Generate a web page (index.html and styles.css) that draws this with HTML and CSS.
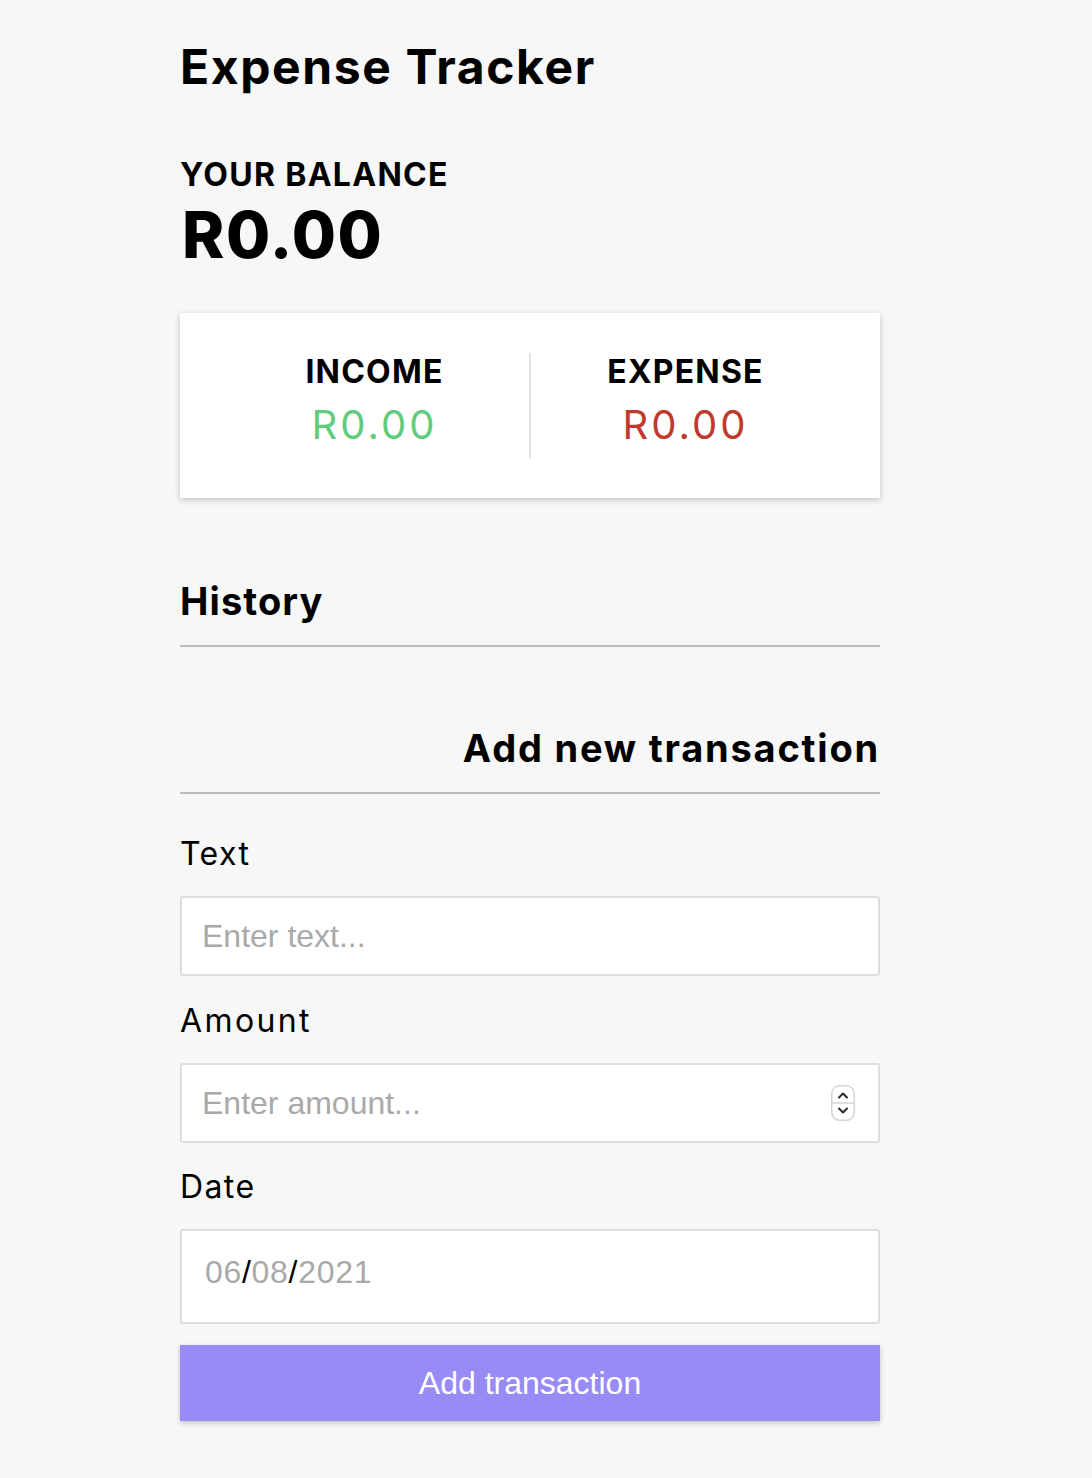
FILE: index.html
```html
<!DOCTYPE html>
<html lang="en">
<head>
<meta charset="utf-8">
<title>Expense Tracker</title>
<link rel="stylesheet" href="styles.css">
</head>
<body>
<main class="container">
  <h2 class="title">Expense Tracker</h2>
  <h4 class="balance-label">Your Balance</h4>
  <h1 class="balance">R0.00</h1>

  <div class="inc-exp">
    <div class="col col-income">
      <h4 class="col-title">Income</h4>
      <p class="money plus">R0.00</p>
    </div>
    <div class="col">
      <h4 class="col-title">Expense</h4>
      <p class="money minus">R0.00</p>
    </div>
  </div>

  <h3 class="section section-history">History</h3>
  <ul class="list"></ul>

  <h3 class="section section-right">Add new transaction</h3>
  <form class="form">
    <div class="form-control">
      <label class="label" for="text">Text</label>
      <input class="input" id="text" type="text" placeholder="Enter text...">
    </div>
    <div class="form-control form-control-mid">
      <label class="label label-amount" for="amount">Amount</label>
      <div class="input field">
        <input class="field-input" id="amount" type="text" placeholder="Enter amount...">
        <svg class="spinner" width="24" height="36" viewBox="0 0 24 36" aria-hidden="true">
          <rect x="0.75" y="0.75" width="22.5" height="34.5" rx="8" fill="#fff" stroke="#d4d4d4" stroke-width="1.5"/>
          <line x1="1" y1="18" x2="23" y2="18" stroke="#d4d4d4" stroke-width="1.5"/>
          <path d="M8 12.5 L12 8.5 L16 12.5" fill="none" stroke="#2a2a2a" stroke-width="2" stroke-linecap="round" stroke-linejoin="round"/>
          <path d="M8 23.5 L12 27.5 L16 23.5" fill="none" stroke="#2a2a2a" stroke-width="2" stroke-linecap="round" stroke-linejoin="round"/>
        </svg>
      </div>
    </div>
    <div class="form-control form-control-last">
      <label class="label" for="date">Date</label>
      <div class="input date" id="date"><span class="seg">06</span><span class="sep">/</span><span class="seg">08</span><span class="sep">/</span><span class="seg">2021</span></div>
    </div>
    <button class="btn" type="button">Add transaction</button>
  </form>
</main>
</body>
</html>
```

FILE: styles.css
```css
* {
  box-sizing: border-box;
}

body {
  margin: 0;
  padding: 38px 32px 60px 0;
  background: #f7f7f7;
  color: #000;
  font-family: Inter, "DejaVu Sans", sans-serif;
}

.container {
  width: 700px;
  margin: 0 auto;
}

.title {
  margin: 0;
  font-size: 48px;
  line-height: 58px;
  font-weight: 700;
  letter-spacing: 1.6px;
}

.balance-label {
  margin: 60px 0 0;
  font-size: 32px;
  line-height: 38px;
  font-weight: 700;
  text-transform: uppercase;
  letter-spacing: 1.3px;
}

.balance {
  margin: 3px 0 0;
  font-size: 64px;
  line-height: 76px;
  font-weight: 800;
  letter-spacing: 1.5px;
  padding-left: 2px;
}

.inc-exp {
  margin-top: 40px;
  padding: 40px;
  background: #fff;
  display: flex;
  box-shadow: 0 2px 6px rgba(0, 0, 0, 0.22);
}

.col {
  flex: 1;
  text-align: center;
}

.col-income {
  border-right: 2px solid #e2e2e2;
}

.col-title {
  margin: 0;
  font-size: 32px;
  line-height: 38px;
  font-weight: 700;
  text-transform: uppercase;
  letter-spacing: 1.2px;
}

.money {
  margin: 10px 0 0;
  padding-bottom: 9px;
  font-size: 40px;
  line-height: 48px;
  font-weight: 400;
  letter-spacing: 3px;
}

.plus {
  color: #62cb7c;
}

.minus {
  color: #c0392b;
}

.section {
  margin: 80px 0 0;
  padding-bottom: 21px;
  border-bottom: 2px solid #bbb;
  font-size: 38px;
  line-height: 46px;
  font-weight: 700;
}

.section-history {
  letter-spacing: 1.1px;
}

.section-right {
  margin-top: 78px;
  text-align: right;
  letter-spacing: 1.8px;
}

.list {
  margin: 0;
  padding: 0;
  list-style: none;
}

.form {
  margin-top: 38px;
}

.form-control {
  margin-bottom: 23px;
}

.form-control-mid {
  margin-bottom: 22px;
}

.form-control-last {
  margin-bottom: 21px;
}

.label {
  display: block;
  margin-bottom: 23px;
  padding-top: 3px;
  font-size: 32px;
  line-height: 38px;
  font-weight: 400;
  letter-spacing: 1.4px;
}

.label-amount {
  letter-spacing: 2.4px;
}

.input {
  display: block;
  width: 100%;
  height: 80px;
  margin: 0;
  padding: 0 20px;
  background: #fff;
  border: 2px solid #dedede;
  border-radius: 3px;
  font-family: "Liberation Sans", Arial, sans-serif;
  font-size: 32px;
  color: #000;
  outline: none;
}

.input::placeholder,
.field-input::placeholder {
  color: #a9a9a9;
  opacity: 1;
}

.field {
  display: flex;
  align-items: center;
  padding-right: 23px;
}

.field-input {
  flex: 1;
  min-width: 0;
  height: 100%;
  margin: 0;
  padding: 0;
  border: 0;
  background: transparent;
  font-family: "Liberation Sans", Arial, sans-serif;
  font-size: 32px;
  outline: none;
}

.spinner {
  flex: none;
  display: block;
}

.date {
  height: 95px;
  padding: 23px 0 0 23px;
  line-height: 37px;
  letter-spacing: 0.7px;
}

.seg {
  color: #a9a9a9;
}

.sep {
  color: #000;
}

.btn {
  display: block;
  width: 100%;
  height: 76px;
  margin: 0;
  border: 0;
  background: #998bf6;
  color: #fff;
  font-family: "Liberation Sans", Arial, sans-serif;
  font-size: 32px;
  box-shadow: 0 2px 5px rgba(0, 0, 0, 0.22);
  cursor: pointer;
}
```
